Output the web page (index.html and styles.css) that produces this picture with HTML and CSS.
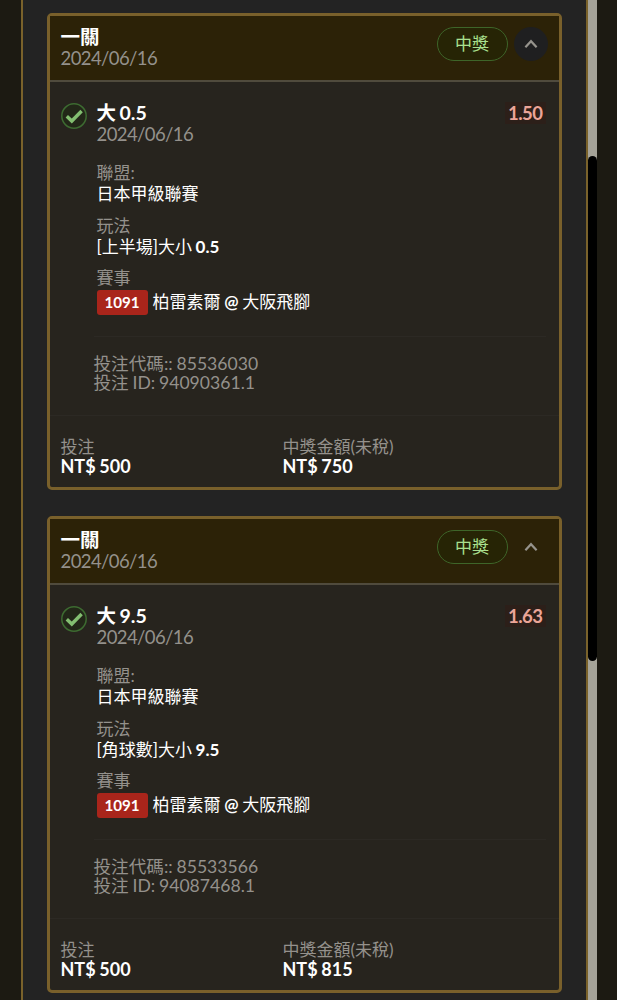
FILE: index.html
```html
<!DOCTYPE html>
<html lang="zh-Hant">
<head>
  <meta charset="UTF-8">
  <meta name="viewport" content="width=device-width, initial-scale=1.0">
  <title>投注紀錄</title>
  <link rel="stylesheet" href="styles.css">
</head>
<body>

  <div class="panel">
    <div class="card">
      <div class="card-header">
        <div>
          <div class="title">一關</div>
          <div class="date">2024/06/16</div>
        </div>
        <div class="actions">
          <span class="status">中獎</span>
          <button class="toggle active"><svg width="14" height="10" viewBox="0 0 14 10"><path d="M1.4 8.2 L7 2.2 L12.6 8.2"/></svg></button>
        </div>
      </div>

      <div class="bet">
        <svg class="check" width="26" height="26" viewBox="0 0 26 26"><circle cx="13" cy="13" r="12.2"/><path d="M5.8 13.2 L10.8 18 L20.6 8"/></svg>
        <div class="bet-body">
          <div class="bet-top">
            <div class="title">大 0.5</div>
            <div class="odds">1.50</div>
          </div>
          <div class="date">2024/06/16</div>
          <div class="field">
            <div class="label">聯盟:</div>
            <div class="value">日本甲級聯賽</div>
          </div>
          <div class="field">
            <div class="label">玩法</div>
            <div class="value">[上半場]大小 <b>0.5</b></div>
          </div>
          <div class="field">
            <div class="label">賽事</div>
            <div class="match"><span class="code">1091</span><span>柏雷素爾 <b>@</b> 大阪飛腳</span></div>
          </div>
          <div class="ids">
            <div>投注代碼:: 85536030</div>
            <div>投注 ID: 94090361.1</div>
          </div>
        </div>
      </div>

      <div class="card-footer">
        <div>
          <div class="label">投注</div>
          <div class="amount">NT$ 500</div>
        </div>
        <div>
          <div class="label">中獎金額(未稅)</div>
          <div class="amount">NT$ 750</div>
        </div>
      </div>
    </div>

    <div class="card">
      <div class="card-header">
        <div>
          <div class="title">一關</div>
          <div class="date">2024/06/16</div>
        </div>
        <div class="actions">
          <span class="status">中獎</span>
          <button class="toggle"><svg width="14" height="10" viewBox="0 0 14 10"><path d="M1.4 8.2 L7 2.2 L12.6 8.2"/></svg></button>
        </div>
      </div>

      <div class="bet">
        <svg class="check" width="26" height="26" viewBox="0 0 26 26"><circle cx="13" cy="13" r="12.2"/><path d="M5.8 13.2 L10.8 18 L20.6 8"/></svg>
        <div class="bet-body">
          <div class="bet-top">
            <div class="title">大 9.5</div>
            <div class="odds">1.63</div>
          </div>
          <div class="date">2024/06/16</div>
          <div class="field">
            <div class="label">聯盟:</div>
            <div class="value">日本甲級聯賽</div>
          </div>
          <div class="field">
            <div class="label">玩法</div>
            <div class="value">[角球數]大小 <b>9.5</b></div>
          </div>
          <div class="field">
            <div class="label">賽事</div>
            <div class="match"><span class="code">1091</span><span>柏雷素爾 <b>@</b> 大阪飛腳</span></div>
          </div>
          <div class="ids">
            <div>投注代碼:: 85533566</div>
            <div>投注 ID: 94087468.1</div>
          </div>
        </div>
      </div>

      <div class="card-footer">
        <div>
          <div class="label">投注</div>
          <div class="amount">NT$ 500</div>
        </div>
        <div>
          <div class="label">中獎金額(未稅)</div>
          <div class="amount">NT$ 815</div>
        </div>
      </div>
    </div>
  </div>

  <div class="scrollbar">
    <div class="thumb"></div>
  </div>

</body>
</html>
```
FILE: styles.css
```css
* {
  box-sizing: border-box;
}

body {
  margin: 0;
  padding-left: 21px;
  height: 1000px;
  overflow: hidden;
  display: flex;
  background: #1c1a12;
  color: #fff;
  font-family: Lato, "Noto Sans CJK TC", sans-serif;
  font-size: 17px;
  line-height: 20px;
  word-spacing: -0.7px;
}

.panel {
  width: 566.5px;
  padding: 13px 24px 0 23.5px;
  background: #232323;
  border: solid #7a622b;
  border-width: 0 2px;
}

.card {
  height: 477px;
  margin-bottom: 26px;
  background: #27241e;
  border: 3px solid #79602b;
  border-radius: 5px;
}

.card-header {
  height: 66px;
  padding: 11px 11px 0;
  display: flex;
  justify-content: space-between;
  background: #2c2207;
  border-bottom: 2px solid #504b3d;
}

.title {
  font-size: 19.5px;
  font-weight: bold;
  line-height: 21px;
  word-spacing: -1.2px;
}

.card-header .title {
  margin-top: -1px;
  margin-bottom: 1px;
}

.date {
  color: #94918c;
  font-size: 18.5px;
  line-height: 21px;
  letter-spacing: -0.6px;
}

.actions {
  display: flex;
  gap: 6px;
}

.status {
  width: 71px;
  height: 34px;
  border: 1.5px solid #3e6529;
  border-radius: 17px;
  background: #262405;
  color: #a9e08f;
  line-height: 32px;
  text-align: center;
}

.toggle {
  width: 34px;
  height: 34px;
  padding: 0;
  display: flex;
  align-items: center;
  justify-content: center;
  border: none;
  border-radius: 50%;
  background: none;
}

.toggle.active {
  background: #1f1f20;
}

.toggle path {
  fill: none;
  stroke: #96938c;
  stroke-width: 2.2;
}

.bet {
  height: 334px;
  padding: 20px 13px 0 11px;
  display: flex;
  gap: 10px;
  border-bottom: 1px solid #2c2924;
}

.check {
  flex: none;
  margin-top: 1px;
}

.check circle {
  fill: #222718;
  stroke: #3d6b31;
  stroke-width: 1.5;
}

.check path {
  fill: none;
  stroke: #83bf71;
  stroke-width: 3.4;
}

.bet-body {
  flex: 1;
}

.bet-top {
  display: flex;
  justify-content: space-between;
}

.odds {
  padding: 0 3px;
  color: #eba598;
  background: #2c1f19;
  font-size: 18.5px;
  font-weight: bold;
  line-height: 22px;
  letter-spacing: -0.5px;
}

.field {
  margin-top: 12px;
}

.date + .field {
  margin-top: 18px;
}

.label {
  color: #94918c;
}

.value {
  padding-top: 1px;
  line-height: 19px;
}

.date + .field .value {
  line-height: 20px;
}

.match {
  height: 26px;
  margin-top: 1px;
  display: flex;
  align-items: center;
  gap: 5px;
}

.code {
  width: 51px;
  height: 25px;
  border-radius: 3px;
  background: #a9251b;
  font-size: 15.2px;
  font-weight: bold;
  line-height: 25px;
  text-align: center;
}

.ids {
  margin-top: 21px;
  margin-left: -3px;
  padding-top: 17px;
  border-top: 1px solid #2c2924;
  color: #94918c;
  font-size: 17.6px;
  line-height: 19px;
}

.card-footer {
  padding: 21px 11px 0;
  display: grid;
  grid-template-columns: 222px 1fr;
}

.amount {
  font-size: 18px;
  font-weight: bold;
  line-height: 19px;
}

.scrollbar {
  width: 9.5px;
  padding-top: 156px;
  background: #a5a398;
}

.thumb {
  height: 505px;
  border-radius: 5px;
  background: #000;
}
```
